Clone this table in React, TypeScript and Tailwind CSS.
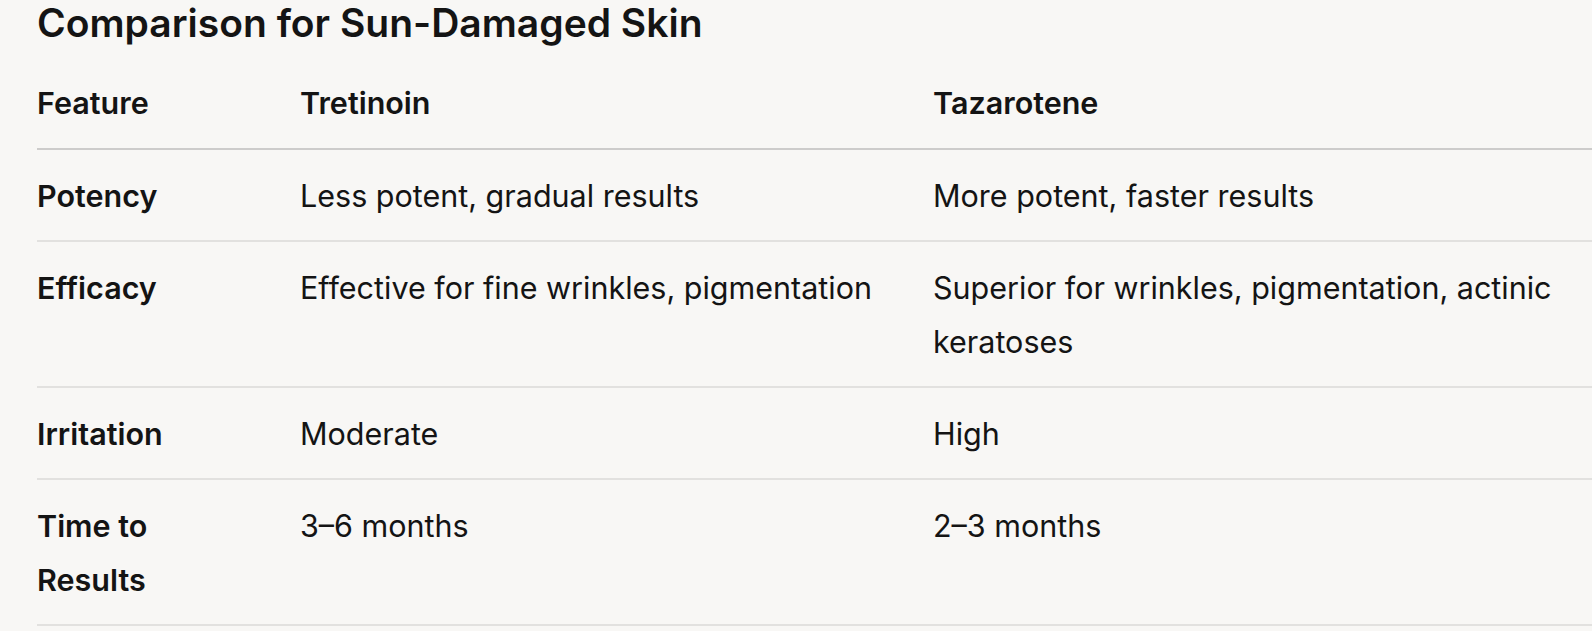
import React from 'react';

const rows: [string, string, string][] = [
  ['Potency', 'Less potent, gradual results', 'More potent, faster results'],
  ['Efficacy', 'Effective for fine wrinkles, pigmentation', 'Superior for wrinkles, pigmentation, actinic keratoses'],
  ['Irritation', 'Moderate', 'High'],
  ['Time to Results', '3–6 months', '2–3 months'],
];

export default function App() {
  return (
    <div className="w-[1592px] h-[631px] overflow-hidden bg-[#f8f7f5] text-[#141414] pl-[37px]" style={{ fontFamily: 'Inter, "Noto Sans", sans-serif' }}>
      <h2 className="text-[39px] font-semibold leading-[46px]">Comparison for Sun-Damaged Skin</h2>
      <table className="mt-[12px] border-collapse text-[30.5px] leading-[54px] w-[1700px] table-fixed">
        <thead>
          <tr className="border-b-2 border-[#cdcccb] text-left">
            <th className="w-[263px] font-semibold py-[18px] pr-[48px] align-top">Feature</th>
            <th className="w-[633px] font-semibold py-[18px] pr-[48px] align-top">Tretinoin</th>
            <th className="font-semibold py-[18px] align-top">Tazarotene</th>
          </tr>
        </thead>
        <tbody>
          {rows.map(([f, a, b]) => (
            <tr key={f} className="border-b-2 border-[#e2e1df]">
              <td className="font-semibold pt-[19px] pb-[17px] pr-[48px] align-top">{f}</td>
              <td className="pt-[19px] pb-[17px] pr-[48px] align-top">{a}</td>
              <td className="pt-[19px] pb-[17px] align-top"><div className="w-[633px]">{b}</div></td>
            </tr>
          ))}
        </tbody>
      </table>
    </div>
  );
}
